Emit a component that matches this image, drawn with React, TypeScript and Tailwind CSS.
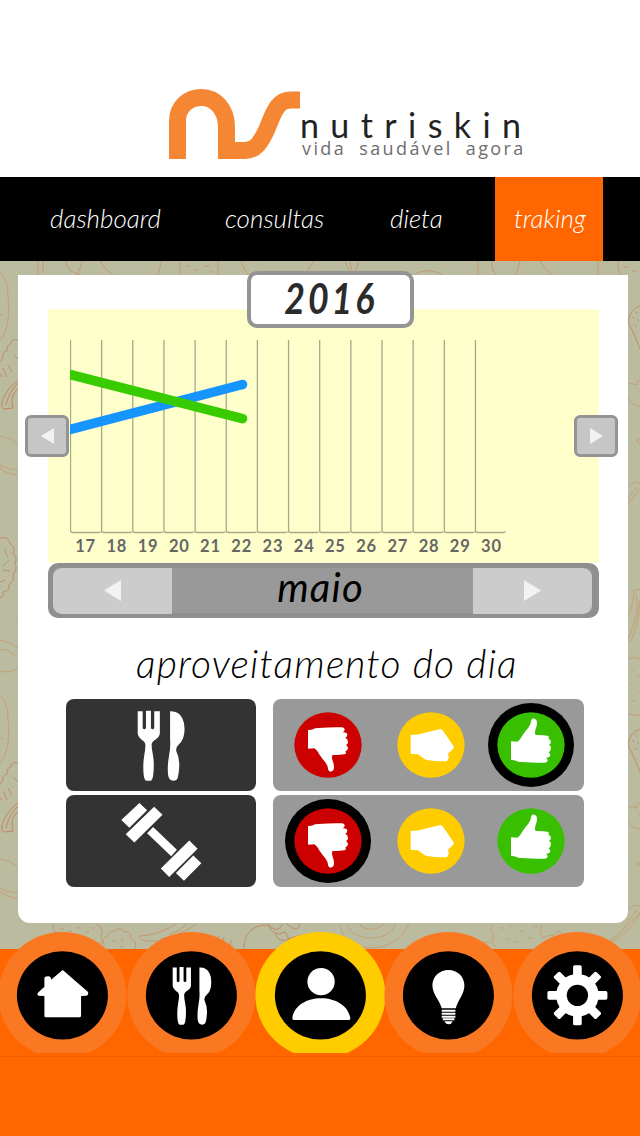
import type { ReactNode } from 'react';
import clsx from 'clsx';

type Rating = 'bad' | 'medium' | 'good';

const tabs = [
    { label: 'dashboard', box: 'w-[163px] pl-[50px]' },
    { label: 'consultas', box: 'w-[165px] pl-[62px]' },
    { label: 'dieta', box: 'w-[167px] pl-[62px]' },
    { label: 'traking', box: 'w-[108px] pl-[19px] bg-[#ff6600]' },
];

const days = Array.from({ length: 14 }, (_, i) => 17 + i);

const rows: { name: string; icon: ReactNode; selected: Rating }[] = [
    { name: 'dieta', icon: <Cutlery className="h-[71px] w-[48px]" />, selected: 'good' },
    { name: 'treino', icon: <Dumbbell />, selected: 'bad' },
];

const thumb =
    'M-60 -45Q-54 -44 -45 -47Q-40 -51 -28 -51Q10 -54 42 -53Q53 -51 49 -43L45 -38Q57 -38 58 -31Q58 -25 52 -22Q60 -18 60 -9Q60 -2 54 0Q60 4 60 10Q59 18 52 19Q57 26 49 28Q32 31 14 30Q10 34 14 48Q18 57 18 65Q18 78 10 79Q5 82 1 75Q0 62 -7 53Q-16 43 -27 27Q-34 13 -42 10L-58 11Q-61 11 -60 6Z';

function Cutlery({ className, x, y, width, height }: { className?: string; x?: number; y?: number; width?: number; height?: number }) {
    return (
        <svg viewBox="264 239 145 215" className={className} x={x} y={y} width={width} height={height} fill="#fff">
            <path d="M266 243H281V294Q286 300 291 294V241H306V294Q311 300 316 294V243H333V309Q333 320 320 328Q310 333 308 342Q308 357 312 375Q317 400 313 435Q311 452 305 453H292Q286 452 284 435Q281 405 286 375Q290 355 289 342Q288 334 278 329Q266 320 266 309Z" />
            <path d="M364 243Q391 242 401 264Q410 281 407 308Q405 330 391 343Q380 353 383 364Q392 383 392 405Q391 430 387 444Q385 453 374 453Q360 453 358 436Q355 410 361 377Q366 350 364 330Z" />
        </svg>
    );
}

function Dumbbell() {
    return (
        <svg viewBox="215 515 242 236" className="h-[79px] w-[81px]" fill="#fff">
            <path d="M270 518L293 540L240 592L216 569Z" />
            <path d="M314 529L339 553L255 636L229 611Z" />
            <path d="M311 590L382 658L365 677L293 608Z" />
            <path d="M419 630L444 655L359 739L334 714Z" />
            <path d="M431 675L455 698L403 750L379 727Z" />
        </svg>
    );
}

function RatingButton({ kind, active }: { kind: Rating; active: boolean }) {
    const color = { bad: '#cc0000', medium: '#ffcc00', good: '#38c000' }[kind];
    return (
        <svg viewBox="-129 -126 258 252" className="h-[84px] w-[86px]">
            {active && <ellipse rx="129" ry="126" fill="#000" />}
            <ellipse rx="101" ry="98.5" fill={color} />
            {kind === 'medium' ? (
                <path
                    d="M-61 -28Q-61 -31 -57 -31L-43 -31L26 -47Q32 -49 35 -44L53 -18L68 4Q70 8 66 12L51 26L53 36Q52 48 44 49L24 49Q-5 48 -20 42L-39 28L-58 27Q-61 27 -61 23Z"
                    fill="#fff"
                />
            ) : (
                <path d={thumb} fill="#fff" transform={kind === 'good' ? 'scale(1 -1)' : undefined} />
            )}
        </svg>
    );
}

function NavItem({ active, children }: { active?: boolean; children: ReactNode }) {
    return (
        <svg viewBox="-193 -190 386 363" className="h-[121px] flex-1 overflow-visible [clip-path:inset(0_-4px)]">
            <ellipse rx={active ? 195 : 192} ry="190" fill={active ? '#ffcc00' : '#fb7823'} />
            <ellipse rx="136.5" ry="132.5" fill="#000" />
            {children}
        </svg>
    );
}

function Logo() {
    return (
        <svg viewBox="168 88 132 72" className="h-[72px] w-[132px]" fill="none" stroke="#f58634" strokeWidth="17">
            <path d="M177.5 159V121C177.5 106 189 97.5 201.5 97.5C215 97.5 226.5 109 226.5 127V150.5H245C256 150.5 261 142 267 129C275 108 279 100 291 100H300" />
        </svg>
    );
}

// fruit and vegetable line art, only visible around the card
function Doodles() {
    return (
        <svg viewBox="0 261 640 688" className="absolute inset-0 h-full w-full opacity-80" fill="none" stroke="#c99a6c" strokeWidth="1">
            {[0, 423].map(dy => (
                <g key={dy} transform={`translate(0 ${dy})`}>
                    <path d="M0 273Q7 276 8 295Q10 317 6 329Q4 337 0 340M4 308v1M0 315h3" />
                    <path stroke="#c58258" d="M0 361Q2 360 3 357Q2 352 7 351Q7 344 11 344Q11 338 18 340M3 368L7 377M8 365L12 372M13 354L18 359M0 374L2 377" />
                    <path stroke="#c77b50" d="M18 380Q8 387 3 399Q0 407 4 409L13 408L12 403Q11 394 18 389M18 383Q9 391 6 405" />
                    <path d="M0 436Q10 437 18 444M0 465Q8 470 18 470M0 468Q8 475 18 475" />
                    <path stroke="#c58258" d="M628 322Q630 309 640 306M628 322Q634 333 640 349M633 317l1 2M636 312l1 2M635 325l1 2M637 319l2 2" />
                    <path d="M640 380Q636 381 637 385Q628 382 628 385M628 398Q632 406 640 406M638 391l2 2M640 439L636 441L640 443M628 487Q633 481 640 483M628 503L640 489M628 498L637 487" />
                </g>
            ))}
            <path stroke="#c58258" d="M0 538Q9 536 10 544Q16 547 13 553Q18 559 15 563Q18 570 13 574Q15 582 9 584Q10 592 4 591Q3 598 0 598M4 549L8 557M9 560L3 566M10 571L3 570M0 582L5 580" />
            <path d="M0 640Q10 642 18 648M0 650Q8 648 15 656M0 671Q10 674 18 668M16 621l2 2" />
            <path d="M640 589L634 590Q633 608 628 615M636 594Q641 610 628 640M640 600Q638 630 630 642M628 659Q634 656 640 659M628 714Q635 716 640 715M631 670h3M636 676h3M630 684h3M637 692h2M631 701h4" />
            <path stroke="#c99064" d="M38 261V275M43 261V272M66 261Q65 270 80 275M82 261Q80 270 77 275M100 261Q105 270 113 275M161 261Q160 270 158 275M180 262V275M218 261V275M186 266h4M194 270h5M204 266h5M182 272h4M209 272h4M241 261Q243 269 248 275M314 261Q308 270 305 275M345 262L351 275M350 262L353 275M358 262L355 275M414 275Q428 266 442 275M478 261V275M492 261Q491 270 496 275M520 261Q518 270 515 275M540 261Q545 270 552 275M598 261V275M618 261Q618 270 620 275M624 267h5M632 271h5" />
            <path stroke="#c99064" d="M53 924Q52 932 59 934Q66 932 68 936M60 929h4M68 931h4M77 928h4M85 932h4M92 928h3M96 924Q105 928 101 936Q104 943 98 945M104 945Q101 938 108 936Q108 930 115 931Q120 926 124 932Q132 931 130 938Q138 941 135 949M112 940l4 2M121 938l3 3M119 946l4 1M176 924Q159 935 140 936Q139 941 150 941H165M196 924Q182 935 160 939M187 924Q180 931 169 935" />
            <path stroke="#c58258" d="M244 949Q244 925 268 925Q274 938 285 932Q294 946 288 949M268 924Q276 935 283 924M286 924Q299 934 300 924M275 933Q279 945 290 938Q304 934 307 936M215 949L219 936M222 949L224 937M230 949L231 940" />
            <path d="M340 924Q343 947 370 948Q398 948 409 924M346 924Q352 938 372 938Q389 938 396 924M359 924Q370 935 384 924M478 949Q481 941 490 942M492 924Q490 932 494 935Q489 942 497 948M500 928h4M510 926h3M520 931h4M505 939h4M515 942h4M528 938h4M534 927h4M541 925Q540 934 543 938Q550 934 553 936Q560 927 562 935M628 922Q620 939 600 944M640 914Q630 932 610 943" />
        </svg>
    );
}

export default function App() {
    return (
        <div className="flex h-[1136px] w-[640px] flex-col overflow-hidden bg-white font-['Lato',sans-serif]">
            <header className="flex h-[177px] shrink-0 items-start pt-[88px] pl-[168px]">
                <Logo />
                <div className="pt-[22px] whitespace-nowrap">
                    <h1 className="text-[34px] leading-[29px] tracking-[11.4px] text-[#222]">nutriskin</h1>
                    <p className="pl-[2px] font-['Open_Sans',sans-serif] text-[18px] leading-[19px] tracking-[2.4px] text-[#6d6d6d] [word-spacing:6px]">
                        vida saudável agora
                    </p>
                </div>
            </header>

            <nav className="flex h-[84px] shrink-0 bg-black">
                {tabs.map(tab => (
                    <a key={tab.label} className={clsx('pt-[25px] text-[26px] leading-[32px] font-light whitespace-nowrap text-white italic', tab.box)}>
                        {tab.label}
                    </a>
                ))}
            </nav>

            <main className="relative h-[688px] shrink-0 bg-[#babb9f] pt-[14px] pl-[18px]">
                <Doodles />
                <section className="relative h-[648px] w-[610px] rounded-b-[12px] bg-white pt-[34px] pl-[30px]">
                    <div className="flex h-[254px] w-[551px] flex-col bg-[#ffffcc] pt-[31px] pl-[22px]">
                        <svg viewBox="70 340 436 194" className="h-[194px] w-[436px] shrink-0">
                            <g fill="none" stroke="#a7a88a" strokeWidth="1.3">
                                {days.map((day, i) => (
                                    <path key={day} d={`M${70.5 + i * 31.15} 340V530.5q0 2 2 2h26q2 0 2 -1`} />
                                ))}
                            </g>
                            <g strokeWidth="9.5">
                                <path d="M68 430L242.500 384.500" stroke="#1695ff" />
                                <circle cx="242.500" cy="384.500" r="4.800" fill="#1695ff" stroke="none" />
                                <path d="M68 374L242.500 418.700" stroke="#38cc00" />
                                <circle cx="242.500" cy="418.700" r="4.800" fill="#38cc00" stroke="none" />
                            </g>
                        </svg>
                        <div className="flex w-[437px] text-center text-[16.5px] leading-[25px] font-bold tracking-[0.8px] text-[#666]">
                            {days.map(day => (
                                <span key={day} className="flex-1">{day}</span>
                            ))}
                        </div>
                    </div>

                    <div className="flex h-[55px] w-[551px] items-center justify-between rounded-[10px] border-[5px] border-r-[7px] border-[#8f8f8f] bg-[#999]">
                        <button className="flex h-[46px] w-[119px] items-center justify-center rounded-l-[9px] bg-[#ccc]">
                            <svg viewBox="0 0 17 21" className="h-[21px] w-[17px]" fill="#f2f2f2"><path d="M17 0V21L0 10.500Z" /></svg>
                        </button>
                        <span className="pr-[4px] pb-[8px] text-[40px] leading-[44px] tracking-[1.2px] text-black italic">maio</span>
                        <button className="flex h-[46px] w-[119px] items-center justify-center rounded-r-[9px] bg-[#ccc]">
                            <svg viewBox="0 0 17 21" className="h-[21px] w-[17px]" fill="#f2f2f2"><path d="M0 0V21L17 10.500Z" /></svg>
                        </button>
                    </div>

                    <h2 className="mt-[21px] ml-[88px] text-[39px] leading-[48px] font-light tracking-[1.2px] whitespace-nowrap text-black italic">
                        aproveitamento do dia
                    </h2>

                    <div className="mt-[12px] ml-[18px] flex flex-col gap-[4px]">
                        {rows.map(row => (
                            <div key={row.name} className="flex gap-[17px]">
                                <div className="flex h-[92px] w-[190px] items-center justify-center rounded-[8px] bg-[#333]">
                                    {row.icon}
                                </div>
                                <div className="grid h-[92px] w-[311px] grid-cols-[103px_100px_86px] items-center rounded-[8px] bg-[#999] pl-[12px]">
                                    <RatingButton kind="bad" active={row.selected === 'bad'} />
                                    <RatingButton kind="medium" active={row.selected === 'medium'} />
                                    <RatingButton kind="good" active={row.selected === 'good'} />
                                </div>
                            </div>
                        ))}
                    </div>

                    <div className="absolute -top-[4px] left-[229px] flex h-[57px] w-[167px] items-center justify-center rounded-[10px] border-4 border-[#949494] bg-white pb-[3px] text-[42px] font-bold text-[#2b2b2b] italic">
                        <span className="scale-x-85 tracking-[3.5px]">2016</span>
                    </div>
                    <button className="absolute top-[140px] left-[7px] flex h-[42px] w-[44px] items-center justify-center rounded-[6px] border-[3px] border-[#949494] bg-[#c6c6c6]">
                        <svg viewBox="0 0 13 16" className="h-4 w-[13px]" fill="#f2f2f2"><path d="M13 0V16L0 8Z" /></svg>
                    </button>
                    <button className="absolute top-[140px] left-[556px] flex h-[42px] w-[44px] items-center justify-center rounded-[6px] border-[3px] border-[#949494] bg-[#c6c6c6]">
                        <svg viewBox="0 0 13 16" className="h-4 w-[13px]" fill="#f2f2f2"><path d="M0 0V16L13 8Z" /></svg>
                    </button>
                </section>
            </main>

            <footer className="flex-1 bg-[#ff6600]">
                <div className="relative -mx-[2px] -mt-[17px] flex">
                    <NavItem>
                        <path d="M1 -76L77 -10Q79 0 72 1L56 2V62Q56 65 52 66H-51Q-54 65 -54 62V2L-72 1Q-77 -1 -74 -7L-54 -26V-51Q-54 -57 -43 -57Q-34 -57 -34 -47Z" fill="#fff" />
                    </NavItem>
                    <NavItem>
                        <Cutlery x={-58} y={-87} width={119} height={176} />
                    </NavItem>
                    <NavItem active>
                        <circle cx="2" cy="-41" r="41" fill="#fff" />
                        <path d="M-84 67C-78 30 -40 9 2 9C48 9 84 33 90 69Q90 74 86 74H-80Q-85 73 -84 67Z" fill="#fff" />
                    </NavItem>
                    <NavItem>
                        <path d="M0 -76C28 -76 48 -55 48 -30C48 -4 30 12 22 39H-20C-28 12 -48 -4 -48 -30C-48 -55 -28 -76 0 -76Z" fill="#fff" />
                        <path d="M-20 46H21M-20 55H21M-20 64H21M-17 72H18" stroke="#fff" strokeWidth="6" />
                        <path d="M-12 78H13Q9 87 1 87Q-8 87 -12 78Z" fill="#fff" />
                    </NavItem>
                    <NavItem>
                        {[0, 45, 90, 135].map(angle => (
                            <rect key={angle} x="-13" y="-90" width="26" height="180" rx="5" fill="#fff" transform={`rotate(${angle})`} />
                        ))}
                        <circle r="64" fill="#fff" />
                        <circle r="32" fill="#000" />
                    </NavItem>
                </div>
                <div className="mt-[3px] h-px bg-[#f06000]" />
            </footer>
        </div>
    );
}
